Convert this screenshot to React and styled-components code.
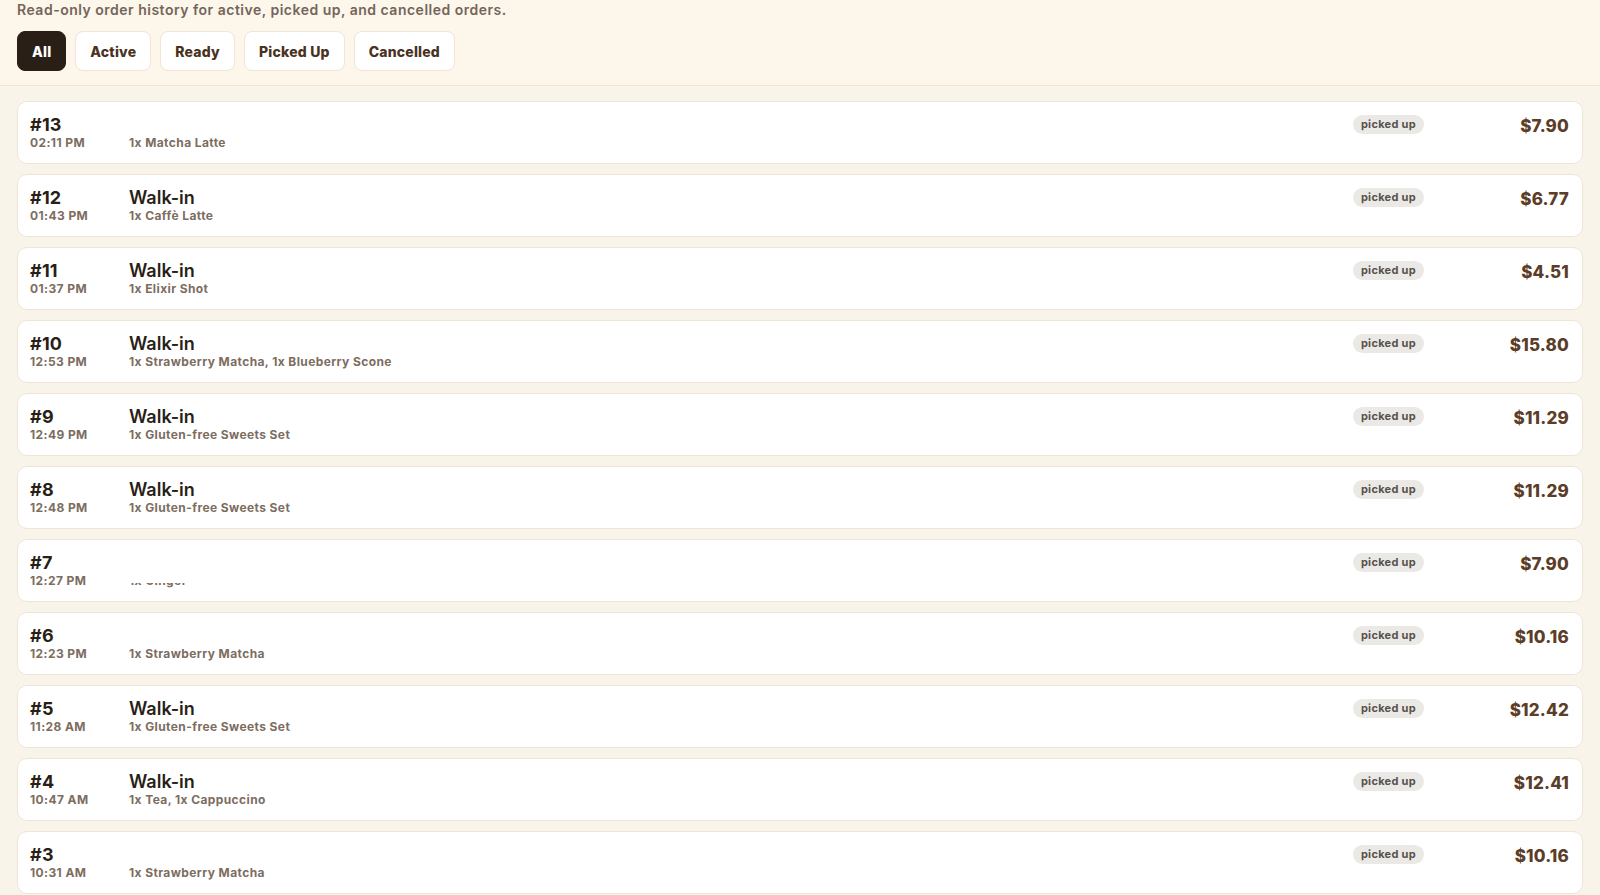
import React from 'react'
import styled, { createGlobalStyle } from 'styled-components'

const Global = createGlobalStyle`
    html, body { margin: 0; padding: 0; overflow: hidden; background: #f9f4ea; }
    body { font-family: Inter, "Noto Sans", "Liberation Sans", sans-serif; color: #2a1f17; }
`

const Header = styled.div`
    background: #fdf6ea; border-bottom: 1px solid #efe6d8; padding: 0 17px 14px;
`

const Subtitle = styled.p`
    margin: 0 0 11px; font-size: 14px; line-height: 20px; font-weight: 600; color: #73655a; letter-spacing: 0.5px;
`

const Tabs = styled.div`
    display: flex; gap: 9px;
`

const Tab = styled.button`
    height: 40px; padding: 0 14px; border-radius: 8px; font-family: inherit; font-size: 14px; font-weight: 800;
    letter-spacing: 0.2px;
    border: 1px solid ${p => p.$active ? '#2a1f17' : '#f0e5d6'};
    background: ${p => p.$active ? '#2a1f17' : '#fff'};
    color: ${p => p.$active ? '#fff' : '#4a3222'};
`

const List = styled.div`
    display: flex; flex-direction: column; gap: 10px; padding: 15px 17px;
`

const Card = styled.div`
    display: grid; grid-template-columns: 87px 1fr auto 133px; column-gap: 12px; align-items: start;
    background: #fff; border: 1px solid #efe5d6; border-radius: 10px; padding: 12px 13px 12px 12px;
`

const Num = styled.div`
    font-size: 18px; line-height: 21px; font-weight: 700; color: #2a1f17; letter-spacing: 0.2px;
`

const Sub = styled.div`
    font-size: 12px; line-height: 16px; font-weight: 700; color: #7c6d5f; white-space: nowrap; letter-spacing: 0.4px;
    ${p => p.$clipped && 'clip-path: inset(10px 0 0 0);'}
`

const Name = styled.div`
    font-size: 18px; line-height: 21px; font-weight: 600; color: #2a1f17; min-height: 21px;
`

const Badge = styled.span`
    display: inline-block; margin-top: 1px; padding: 0 8px; height: 19px; line-height: 19px; border-radius: 10px;
    background: #ebe9e6; color: #57524d; font-size: 11px; font-weight: 700; letter-spacing: 0.3px;
`

const Price = styled.div`
    text-align: right; font-size: 17px; line-height: 21px; font-weight: 800; color: #5c3d28; margin-top: 2px;
    letter-spacing: 0.2px;
`

const orders = [
    { n: 13, t: '02:11 PM', name: '', items: '1x Matcha Latte', price: '$7.90' },
    { n: 12, t: '01:43 PM', name: 'Walk-in', items: '1x Caffè Latte', price: '$6.77' },
    { n: 11, t: '01:37 PM', name: 'Walk-in', items: '1x Elixir Shot', price: '$4.51' },
    { n: 10, t: '12:53 PM', name: 'Walk-in', items: '1x Strawberry Matcha, 1x Blueberry Scone', price: '$15.80' },
    { n: 9, t: '12:49 PM', name: 'Walk-in', items: '1x Gluten-free Sweets Set', price: '$11.29' },
    { n: 8, t: '12:48 PM', name: 'Walk-in', items: '1x Gluten-free Sweets Set', price: '$11.29' },
    { n: 7, t: '12:27 PM', name: '', items: '1x Ginger', price: '$7.90', clipped: true },
    { n: 6, t: '12:23 PM', name: '', items: '1x Strawberry Matcha', price: '$10.16' },
    { n: 5, t: '11:28 AM', name: 'Walk-in', items: '1x Gluten-free Sweets Set', price: '$12.42' },
    { n: 4, t: '10:47 AM', name: 'Walk-in', items: '1x Tea, 1x Cappuccino', price: '$12.41' },
    { n: 3, t: '10:31 AM', name: '', items: '1x Strawberry Matcha', price: '$10.16' },
]

const tabs = ['All', 'Active', 'Ready', 'Picked Up', 'Cancelled']

function App() {
    return (
        <>
            <Global />
            <Header>
                <Subtitle>Read-only order history for active, picked up, and cancelled orders.</Subtitle>
                <Tabs>
                    {tabs.map((t, i) => <Tab key={t} $active={i === 0}>{t}</Tab>)}
                </Tabs>
            </Header>
            <List>
                {orders.map(o => (
                    <Card key={o.n}>
                        <div>
                            <Num>#{o.n}</Num>
                            <Sub>{o.t}</Sub>
                        </div>
                        <div>
                            <Name>{o.name}</Name>
                            <Sub $clipped={o.clipped}>{o.items}</Sub>
                        </div>
                        <Badge>picked up</Badge>
                        <Price>{o.price}</Price>
                    </Card>
                ))}
            </List>
        </>
    )
}

export default App
